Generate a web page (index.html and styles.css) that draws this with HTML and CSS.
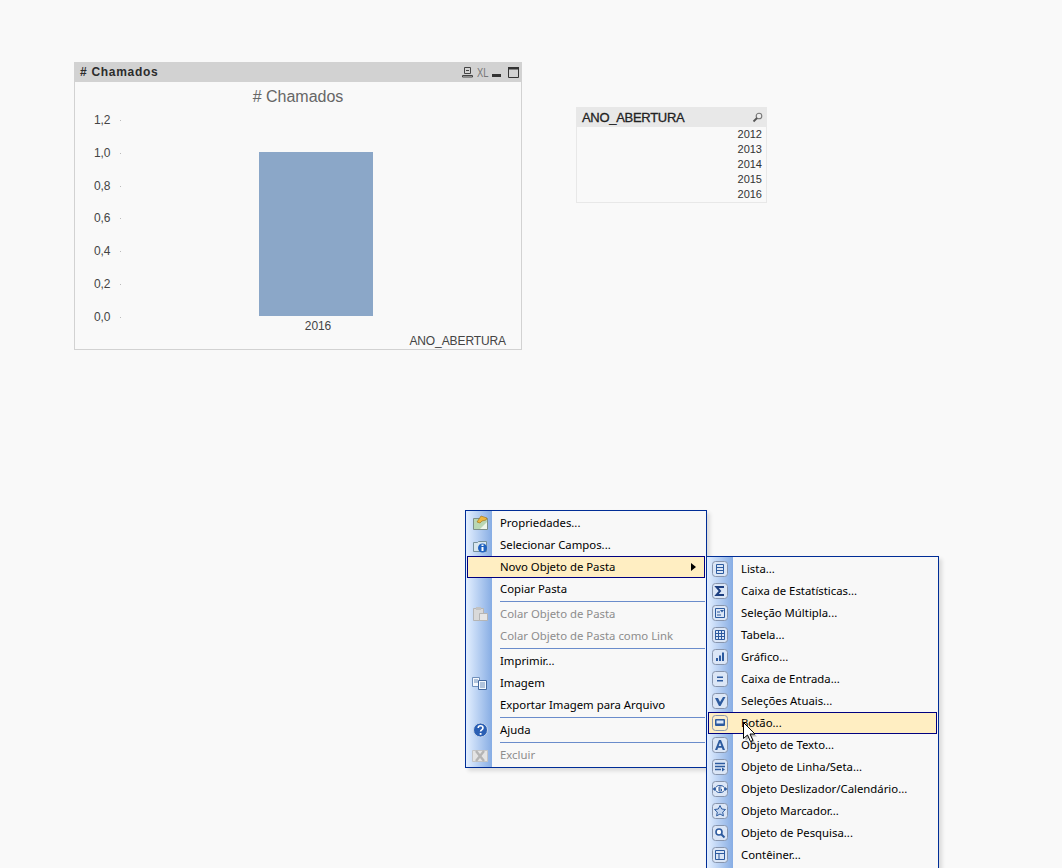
FILE: index.html
```html
<!DOCTYPE html>
<html lang="pt">
<head>
<meta charset="utf-8">
<title>Pasta</title>
<link rel="stylesheet" href="styles.css">
</head>
<body>
<main class="sheet">
  <section class="chart-box">
    <header class="chart-cap">
      <span class="cap-title"># Chamados</span>
      <span class="cap-tools">
        <svg width="11" height="11" viewBox="0 0 11 11"><path d="M2.500 .5h6v6h-6zM.5 10v-1.500h10V10zM4 3.500h3" fill="none" stroke="#444"/></svg>
        <span class="cap-xl">XL</span>
        <svg class="cap-min" width="9" height="3" viewBox="0 0 9 3"><rect width="9" height="3" fill="#333"/></svg>
        <svg width="11" height="11" viewBox="0 0 11 11"><path d="M.5 .5h10v10H.5z" fill="none" stroke="#333"/><path d="M0 0h11v2.500H0z" fill="#333"/></svg>
      </span>
    </header>
    <h2 class="chart-title"># Chamados</h2>
    <div class="plot">
      <div class="y-axis">
        <div class="y-row"><span>1,2</span><i></i></div>
        <div class="y-row"><span>1,0</span><i></i></div>
        <div class="y-row"><span>0,8</span><i></i></div>
        <div class="y-row"><span>0,6</span><i></i></div>
        <div class="y-row"><span>0,4</span><i></i></div>
        <div class="y-row"><span>0,2</span><i></i></div>
        <div class="y-row"><span>0,0</span><i></i></div>
      </div>
      <div class="bars"><div class="bar"></div></div>
    </div>
    <div class="x-label">2016</div>
    <div class="x-title">ANO_ABERTURA</div>
  </section>

  <section class="list-box">
    <header class="list-cap">
      <span>ANO_ABERTURA</span>
      <svg width="11" height="11" viewBox="0 0 11 11"><circle cx="7" cy="4" r="2.800" fill="#eee" stroke="#777" stroke-width="1.100"/><path d="M5 6 1.500 9.500" stroke="#555" stroke-width="1.800"/></svg>
    </header>
    <ul class="list-values">
      <li>2012</li><li>2013</li><li>2014</li><li>2015</li><li>2016</li>
    </ul>
  </section>
</main>

<nav class="menu menu-main">
  <div class="mi"><span class="ic">
    <svg width="18" height="18" viewBox="0 0 18 18"><path d="M2.500 4.500h14v11h-14z" fill="#eef6ec" stroke="#7d8f88"/><path d="M3 5h13v3l-7 7H3z" fill="#b9d7b4"/><path d="M6 8 10 2l6 2-1 2-4 1-2 2z" fill="#edb640" stroke="#9a6d10" stroke-width=".6"/></svg>
  </span><span class="lb">Propriedades...</span></div>
  <div class="mi"><span class="ic">
    <svg width="18" height="18" viewBox="0 0 18 18"><path d="M2.500 6.500h4l1-1h8v10h-13z" fill="#d8e6ee" stroke="#76909c"/><circle cx="11.500" cy="12" r="4.500" fill="#1f62c0"/><path d="M10.500 8.500h2V10h-2zM10.500 11h2v4h-2z" fill="#fff"/></svg>
  </span><span class="lb">Selecionar Campos...</span></div>
  <div class="mi mi-on"><span class="ic"></span><span class="lb">Novo Objeto de Pasta</span><span class="arrow"></span></div>
  <div class="mi"><span class="ic"></span><span class="lb">Copiar Pasta</span></div>
  <div class="sep"></div>
  <div class="mi mi-off"><span class="ic">
    <svg width="18" height="18" viewBox="0 0 18 18"><path d="M2.500 3.500h10v12h-10z" fill="#d9d9d9" stroke="#b5b5b5"/><path d="M5 2h5v3H5z" fill="#c2c2c2"/><path d="M8.500 8.500h8v7h-8z" fill="#e6e6e6" stroke="#b5b5b5"/></svg>
  </span><span class="lb">Colar Objeto de Pasta</span></div>
  <div class="mi mi-off"><span class="ic"></span><span class="lb">Colar Objeto de Pasta como Link</span></div>
  <div class="sep"></div>
  <div class="mi"><span class="ic"></span><span class="lb">Imprimir...</span></div>
  <div class="mi"><span class="ic">
    <svg width="18" height="18" viewBox="0 0 18 18"><path d="M1.500 3.500h7v9h-7z" fill="#f4f8fd" stroke="#6f8fbb"/><path d="M7.500 6.500h8v9h-8z" fill="#f4f8fd" stroke="#44689e"/><path d="M9 9h5M9 11h5M9 13h5M3 6h4M3 8h4" stroke="#6f8fbb"/></svg>
  </span><span class="lb">Imagem</span></div>
  <div class="mi"><span class="ic"></span><span class="lb">Exportar Imagem para Arquivo</span></div>
  <div class="sep"></div>
  <div class="mi"><span class="ic">
    <svg width="18" height="18" viewBox="0 0 18 18"><circle cx="9.500" cy="9" r="7" fill="#2a5fb4" stroke="#c6d5ea"/><path d="M7.200 7c0-3 4.800-3 4.800 0 0 2-2.400 1.800-2.400 3.500" fill="none" stroke="#fff" stroke-width="1.600"/><path d="M8.700 12h1.800v1.800H8.700z" fill="#fff"/></svg>
  </span><span class="lb">Ajuda</span></div>
  <div class="sep"></div>
  <div class="mi mi-off"><span class="ic">
    <svg width="18" height="18" viewBox="0 0 18 18"><path d="M1.500 4.500h15v11h-15z" fill="#e3e3e3" stroke="#c4c4c4"/><path d="M5 5l8 10M13 5 5 15" stroke="#b4b4b4" stroke-width="2.400"/></svg>
  </span><span class="lb">Excluir</span></div>
</nav>

<nav class="menu menu-sub">
  <div class="mi"><span class="ic"><svg class="fr" viewBox="0 0 16 16"><rect class="f" x=".5" y=".5" width="15" height="15" rx="3"/><path d="M4.500 3.500h7v9h-7zM4.500 6.500h7M4.500 9.500h7" class="g"/></svg></span><span class="lb">Lista...</span></div>
  <div class="mi"><span class="ic"><svg class="fr" viewBox="0 0 16 16"><rect class="f" x=".5" y=".5" width="15" height="15" rx="3"/><path d="M12 4H4.500L8 8l-3.500 4H12" fill="none" stroke="#1d3f80" stroke-width="2"/></svg></span><span class="lb">Caixa de Estatísticas...</span></div>
  <div class="mi"><span class="ic"><svg class="fr" viewBox="0 0 16 16"><rect class="f" x=".5" y=".5" width="15" height="15" rx="3"/><path d="M3.500 3.500h9v9h-9zM5 7h3M5 10h4" class="g"/><path d="M8 5h4l-2 2.500z" fill="#2d5b9f"/></svg></span><span class="lb">Seleção Múltipla...</span></div>
  <div class="mi"><span class="ic"><svg class="fr" viewBox="0 0 16 16"><rect class="f" x=".5" y=".5" width="15" height="15" rx="3"/><path d="M3.500 3.500h9v9h-9zM3.500 6.500h9M3.500 9.500h9M6.500 3.500v9M9.500 3.500v9" class="g"/></svg></span><span class="lb">Tabela...</span></div>
  <div class="mi"><span class="ic"><svg class="fr" viewBox="0 0 16 16"><rect class="f" x=".5" y=".5" width="15" height="15" rx="3"/><path d="M4 9h2v3H4zM7 6.500h2V12H7zM10 3.500h2V12h-2z" fill="#2d5b9f"/></svg></span><span class="lb">Gráfico...</span></div>
  <div class="mi"><span class="ic"><svg class="fr" viewBox="0 0 16 16"><rect class="f" x=".5" y=".5" width="15" height="15" rx="3"/><path d="M5 5.500h6v1.500H5zM5 9h6v1.500H5z" fill="#2d5b9f"/></svg></span><span class="lb">Caixa de Entrada...</span></div>
  <div class="mi"><span class="ic"><svg class="fr" viewBox="0 0 16 16"><rect class="f" x=".5" y=".5" width="15" height="15" rx="3"/><path d="M3 5h3l2 4 3-5h2.500L8.500 13H7z" fill="#2d5b9f"/></svg></span><span class="lb">Seleções Atuais...</span></div>
  <div class="mi mi-on"><span class="ic"><svg class="fr" viewBox="0 0 16 16"><rect class="f" x=".5" y=".5" width="15" height="15" rx="3" style="fill:#fbeecb"/><rect x="3" y="4" width="10" height="7" rx="1" fill="#2d5b9f"/><rect x="4.500" y="5.500" width="7" height="3" fill="#dce8f8"/></svg></span><span class="lb">Botão...</span></div>
  <div class="mi"><span class="ic"><svg class="fr" viewBox="0 0 16 16"><rect class="f" x=".5" y=".5" width="15" height="15" rx="3"/><path d="M3 13 7 3h2l4 10h-2.300l-.8-2.200H6.100L5.300 13zM6.700 9h2.600L8 5.500z" fill="#2d5b9f"/></svg></span><span class="lb">Objeto de Texto...</span></div>
  <div class="mi"><span class="ic"><svg class="fr" viewBox="0 0 16 16"><rect class="f" x=".5" y=".5" width="15" height="15" rx="3"/><path d="M3 4.500h10M3 7.500h10M3 10.500h6" class="g" style="stroke-width:1.400"/><path d="M10 8.500l3 2-3 2z" fill="#2d5b9f"/></svg></span><span class="lb">Objeto de Linha/Seta...</span></div>
  <div class="mi"><span class="ic"><svg class="fr" viewBox="0 0 16 16"><rect class="f" x=".5" y=".5" width="15" height="15" rx="3"/><ellipse cx="8" cy="8" rx="4.500" ry="3.500" fill="#fff" stroke="#2d5b9f"/><path d="M9.500 6H7v4h2.500V8H7" fill="none" stroke="#2d5b9f"/><path d="M.5 8 3 6v4zM15.500 8 13 6v4z" fill="#2d5b9f"/></svg></span><span class="lb">Objeto Deslizador/Calendário...</span></div>
  <div class="mi"><span class="ic"><svg class="fr" viewBox="0 0 16 16"><rect class="f" x=".5" y=".5" width="15" height="15" rx="3"/><path d="M8 2.500 9.700 6l3.800.5-2.800 2.600.7 3.800L8 11l-3.400 1.900.7-3.800L2.500 6.500 6.300 6z" fill="#c4d6f0" stroke="#2d5b9f"/></svg></span><span class="lb">Objeto Marcador...</span></div>
  <div class="mi"><span class="ic"><svg class="fr" viewBox="0 0 16 16"><rect class="f" x=".5" y=".5" width="15" height="15" rx="3"/><circle cx="7" cy="7" r="3" fill="#fff" stroke="#2d5b9f" stroke-width="1.600"/><path d="M9 9l3.500 3.500" stroke="#2d5b9f" stroke-width="2"/></svg></span><span class="lb">Objeto de Pesquisa...</span></div>
  <div class="mi"><span class="ic"><svg class="fr" viewBox="0 0 16 16"><rect class="f" x=".5" y=".5" width="15" height="15" rx="3"/><path d="M3.500 3.500h9v9h-9zM3.500 6.500h9M7 6.500v6" class="g"/></svg></span><span class="lb">Contêiner...</span></div>
  <div class="mi"><span class="ic"></span></div>
</nav>

<svg class="pointer" width="15" height="24" viewBox="0 0 15 24"><path d="M2.500 3v16l4-3.500 3 6.500 2.500-1-3-6.500h5z" fill="#000" opacity=".25"/><path d="M.5 .5v16l4-3.500 3 6.500 2.500-1-3-6.500h5z" fill="#fff" stroke="#000" stroke-linejoin="round"/></svg>
</body>
</html>
```
FILE: styles.css
```css
* { box-sizing: border-box; }
html, body { margin: 0; height: 100%; }
body {
  width: 1062px;
  height: 868px;
  overflow: hidden;
  position: relative;
  background: #f9f9f9;
  font-family: "Liberation Sans", Arial, sans-serif;
  color: #000;
}
.sheet { display: block; }

/* Sheet objects sit on a free canvas */
.chart-box {
  position: absolute;
  left: 74px;
  top: 62px;
  width: 448px;
  height: 288px;
  border: 1px solid #d2d2d2;
  border-top: 0;
  display: flex;
  flex-direction: column;
  font-size: 12px;
  letter-spacing: -.1px;
  color: #444;
}
.chart-cap {
  margin: 0 -1px;
  height: 20px;
  flex: none;
  background: #d2d2d2;
  display: flex;
  align-items: center;
  justify-content: space-between;
  padding: 0 3px 0 6px;
}
.cap-title { font: bold 12px "Liberation Sans", sans-serif; color: #2c2c2c; letter-spacing: .7px; }
.cap-tools { display: flex; align-items: center; gap: 4px; }
.cap-xl { font-size: 13px; color: #777; width: 11px; transform: scaleX(.72); transform-origin: left; letter-spacing: 0; }
.cap-min { margin-top: 7px; margin-right: 3px; }
.chart-title {
  margin: 6px 0 0;
  height: 18px;
  font-size: 16px;
  line-height: 18px;
  font-weight: normal;
  letter-spacing: 0;
  text-align: center;
  color: #666;
}
.plot {
  display: flex;
  margin-top: 8px;
  height: 205px;
  flex: none;
}
.y-axis {
  width: 47px;
  padding-left: 19px;
  display: flex;
  flex-direction: column;
  gap: 19.800px;
  flex: none;
}
.y-row { height: 13px; display: flex; align-items: center; gap: 10px; line-height: 13px; }
.y-row span { width: 16px; }
.y-row i { width: 1px; height: 1px; background: #bbb; }
.bars { padding: 38px 0 0 137px; }
.bar { width: 114px; height: 164px; background: #8ba7c8; }
.x-label {
  text-align: center;
  padding-left: 40px;
  line-height: 14px;
  height: 14px;
}
.x-title { margin-top: 1px; text-align: right; padding-right: 15px; line-height: 14px; }

.list-box {
  position: absolute;
  left: 576px;
  top: 107px;
  width: 191px;
  height: 96px;
  border: 1px solid #e8e8e8;
  border-top: 0;
}
.list-cap {
  margin: 0 -1px;
  height: 20px;
  background: #e8e8e8;
  display: flex;
  align-items: center;
  justify-content: space-between;
  padding: 0 4px 0 6px;
  font-size: 13px;
  letter-spacing: -.3px;
  -webkit-text-stroke: .3px #222;
  color: #222;
}
.list-values {
  list-style: none;
  margin: 0;
  padding: 0 4px 0 0;
  font-size: 11px;
  line-height: 15px;
  text-align: right;
  color: #333;
}

/* Context menus float over the sheet */
.menu {
  position: absolute;
  background: linear-gradient(90deg, #e3efff 0, #87ade4 26px, #f8f8f8 26px);
  border: 1px solid #002d96;
  font-family: "Noto Sans", sans-serif;
  font-size: 11.350px;
  box-shadow: 3px 3px 4px rgba(0, 0, 0, .12);
}
.menu-main { left: 465px; top: 510px; width: 242px; height: 258px; padding: 1px; }
.menu-sub { left: 706px; top: 556px; width: 233px; height: 340px; padding: 1px; }
.mi {
  height: 22px;
  display: flex;
  align-items: center;
  line-height: 22px;
  white-space: nowrap;
  padding-right: 9px;
}
.mi-on {
  background: #ffeec2;
  outline: 1px solid #000080;
  outline-offset: -1px;
}
.mi-off { color: #8d8d8d; }
.ic {
  flex: none;
  width: 33px;
  height: 22px;
  padding-left: 4px;
  display: flex;
  align-items: center;
}
.ic svg { display: block; }
.fr { width: 16px; height: 16px; }
.fr .f { fill: #dbe6f6; stroke: #8795ad; }
.fr .g { fill: none; stroke: #2d5b9f; }
.arrow {
  margin-left: auto;
  border-left: 5px solid #000;
  border-top: 4px solid transparent;
  border-bottom: 4px solid transparent;
}
.sep {
  height: 3px;
  padding-top: 1px;
  margin-left: 33px;
}
.sep::before {
  content: "";
  display: block;
  height: 1px;
  background: #6a8ccb;
}
.pointer { position: absolute; left: 743px; top: 722px; }
```
